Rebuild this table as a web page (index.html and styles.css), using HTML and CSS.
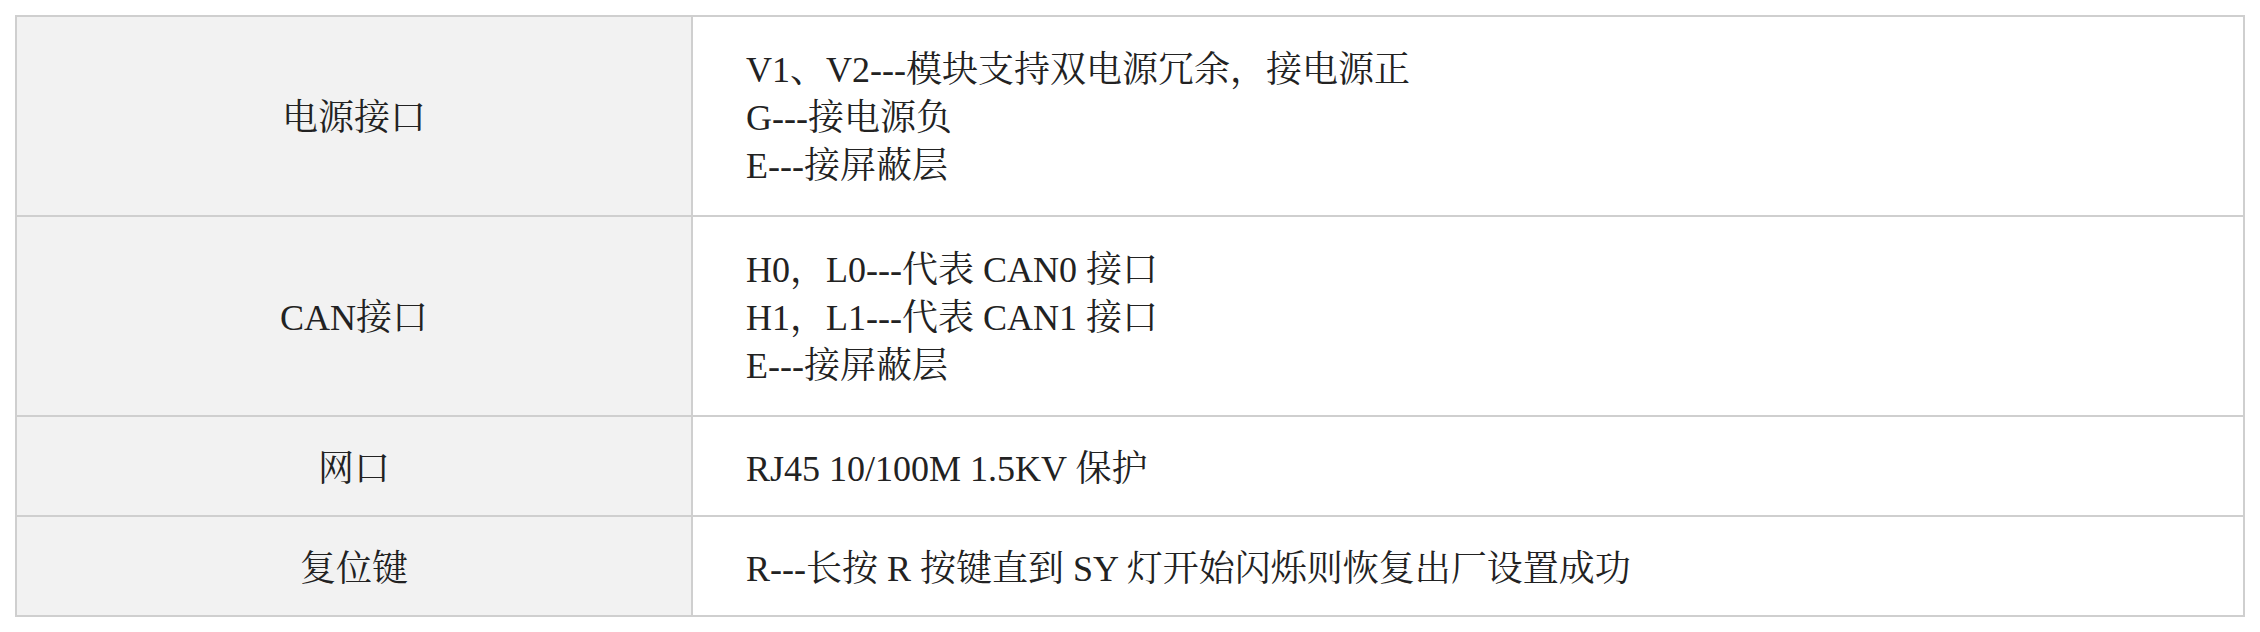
FILE: index.html
```html
<!DOCTYPE html>
<html lang="zh-CN">
<head>
<meta charset="utf-8">
<title>接口说明</title>
<link rel="stylesheet" href="styles.css">
</head>
<body>
<div class="page">
  <table class="spec">
    <colgroup>
      <col class="col-label">
      <col class="col-desc">
    </colgroup>
    <tbody>
      <tr class="multi">
        <td class="label">电源接口</td>
        <td class="desc">V1、V2---模块支持双电源冗余，接电源正<br>G---接电源负<br>E---接屏蔽层</td>
      </tr>
      <tr class="multi">
        <td class="label">CAN接口</td>
        <td class="desc">H0，L0---代表 CAN0 接口<br>H1，L1---代表 CAN1 接口<br>E---接屏蔽层</td>
      </tr>
      <tr class="single">
        <td class="label">网口</td>
        <td class="desc">RJ45 10/100M 1.5KV 保护</td>
      </tr>
      <tr class="single">
        <td class="label">复位键</td>
        <td class="desc">R---长按 R 按键直到 SY 灯开始闪烁则恢复出厂设置成功</td>
      </tr>
    </tbody>
  </table>
</div>
</body>
</html>
```

FILE: styles.css
```css
html, body {
  margin: 0;
  padding: 0;
  background: #ffffff;
}

.page {
  padding: 15px 15px;
}

.spec {
  width: 2230px;
  border-collapse: collapse;
  table-layout: fixed;
  border: 2px solid #cfcfcf;
  font-family: "Liberation Serif", "Noto Serif CJK SC", "Noto Sans CJK SC", serif;
  font-size: 36px;
  line-height: 48px;
  color: #222222;
}

.col-label {
  width: 676px;
}

.spec td {
  border: 2px solid #cfcfcf;
  padding: 28px 53px 22px;
  vertical-align: middle;
}

.spec .multi td {
  padding-top: 29px;
  padding-bottom: 25px;
}

.label {
  background: #f2f2f2;
  text-align: center;
}

.desc {
  background: #ffffff;
  text-align: left;
}
```
